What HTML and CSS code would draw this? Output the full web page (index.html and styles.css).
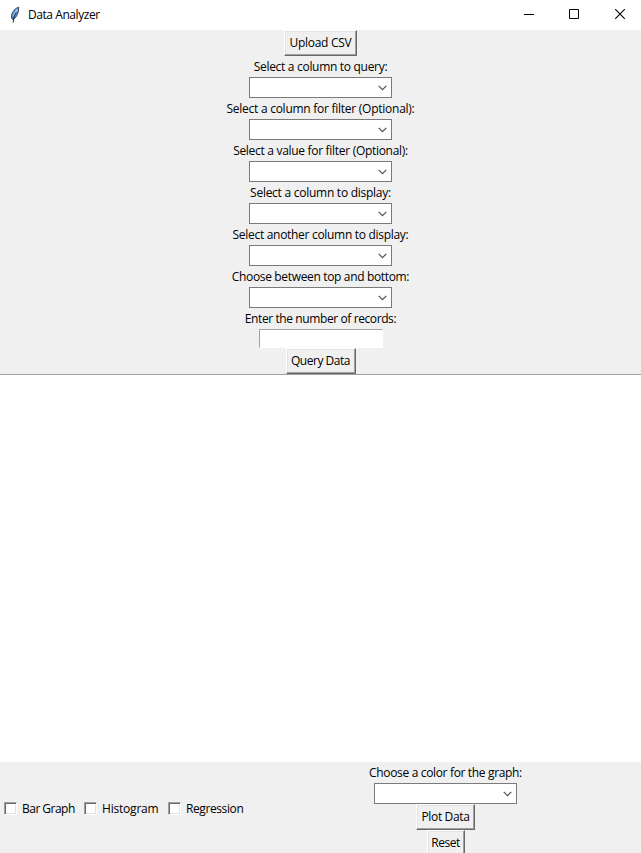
FILE: index.html
```html
<!DOCTYPE html>
<html lang="en">
<head>
<meta charset="utf-8">
<title>Data Analyzer</title>
<link rel="stylesheet" href="styles.css">
</head>
<body>
<svg class="defs" width="0" height="0" aria-hidden="true"><symbol id="chevron" viewBox="0 0 9 6"><path d="M.7 .8 4.5 4.6 8.3 .8" fill="none" stroke="#505050" stroke-width="1.2"/></symbol></svg>
<div class="window">
  <header class="titlebar">
    <svg class="feather" width="12" height="18" viewBox="0 0 12 18"><path d="M9.7 1.2C6.4 2 3.1 5.4 2.5 9.8L2.8 12.7 4.2 13.5C7.9 11.2 9.8 6.3 9.7 1.2Z" fill="#5b9bd8" stroke="#26364a" stroke-width=".9"/><path d="M8.3 3.5 4.6 9.8" stroke="#a5cdf5" stroke-width="1.5"/><path d="M7.4 6.2C5.5 8.8 4.5 11.8 4.2 16.5" fill="none" stroke="#111" stroke-width=".9"/></svg>
    <h1 class="title">Data Analyzer</h1>
    <div class="controls">
      <svg class="minimize" width="11" height="11" viewBox="0 0 11 11"><path d="M0 5.5h10" stroke="#000"/></svg>
      <svg class="maximize" width="11" height="11" viewBox="0 0 11 11"><path d="M.5 .5h9v9h-9z" fill="none" stroke="#000"/></svg>
      <svg width="11" height="11" viewBox="0 0 11 11"><path d="M.2 .2l9.6 9.6M9.8 .2l-9.6 9.6" stroke="#000" stroke-width="1.1"/></svg>
    </div>
  </header>
  <main class="query">
    <button class="btn upload">Upload CSV</button>
    <div class="label t-query">Select a column to query:</div>
    <div class="combo"><svg><use href="#chevron"/></svg></div>
    <div class="label t-filter">Select a column for filter (Optional):</div>
    <div class="combo"><svg><use href="#chevron"/></svg></div>
    <div class="label t-value">Select a value for filter (Optional):</div>
    <div class="combo"><svg><use href="#chevron"/></svg></div>
    <div class="label t-display">Select a column to display:</div>
    <div class="combo"><svg><use href="#chevron"/></svg></div>
    <div class="label t-another">Select another column to display:</div>
    <div class="combo"><svg><use href="#chevron"/></svg></div>
    <div class="label t-choose">Choose between top and bottom:</div>
    <div class="combo"><svg><use href="#chevron"/></svg></div>
    <div class="label t-enter">Enter the number of records:</div>
    <div class="entry"></div>
    <button class="btn run">Query Data</button>
  </main>
  <section class="output"></section>
  <footer class="plot">
    <div class="checks">
      <div class="check bar"><i class="box"></i><span>Bar Graph</span></div>
      <div class="check hist"><i class="box"></i><span>Histogram</span></div>
      <div class="check reg"><i class="box"></i><span>Regression</span></div>
    </div>
    <div class="actions">
      <div class="label t-color">Choose a color for the graph:</div>
      <div class="combo"><svg><use href="#chevron"/></svg></div>
      <button class="btn draw">Plot Data</button>
      <button class="btn reset">Reset</button>
    </div>
  </footer>
</div>
</body>
</html>
```
FILE: styles.css
```css
* { box-sizing: border-box; }
body { margin: 0; overflow: hidden; font: 12px "Open Sans", "Noto Sans", sans-serif; letter-spacing: -0.3px; color: #000; }
.defs { display: block; }
.window { width: 641px; height: 853px; display: flex; flex-direction: column; background: #f0f0f0; overflow: hidden; }
.titlebar { height: 30px; flex: none; display: flex; align-items: center; background: #fff; padding: 0 15px 1px 9px; }
.feather { margin-right: 7px; }
.title { margin: 0; padding-top: 1px; font-size: 12px; font-weight: 400; line-height: 20px; letter-spacing: -0.43px; }
.controls { margin-left: auto; display: flex; }
.minimize { margin-right: 34px; }
.maximize { margin-right: 35px; }
.query { height: 344px; flex: none; display: flex; flex-direction: column; align-items: center; }
.label { height: 21px; flex: none; line-height: 21px; white-space: nowrap; }
.t-filter, .t-display { letter-spacing: -0.26px; }
.t-choose, .t-color { letter-spacing: -0.34px; }
.t-enter { letter-spacing: -0.4px; }
.combo { width: 143px; height: 21px; flex: none; background: #fff; border: 1px solid #7a7a7a; display: flex; justify-content: flex-end; align-items: center; padding-right: 4px; }
.combo svg { width: 9px; height: 6px; }
.entry { width: 124px; height: 19px; flex: none; background: #fff; border: 1px solid; border-color: #a0a0a0 #fff #fff #a0a0a0; }
.btn { height: 26px; flex: none; padding: 0; font: inherit; letter-spacing: inherit; line-height: 20px; color: #000; white-space: nowrap; background: #f0f0f0; border: 1px solid; border-color: #fff #696969 #696969 #fff; border-radius: 0; box-shadow: inset -1px -1px #a0a0a0, inset 1px 1px #e3e3e3; }
.upload { width: 73px; }
.run { width: 70px; letter-spacing: -0.48px; }
.draw { width: 59px; letter-spacing: -0.35px; }
.reset { width: 38px; letter-spacing: -0.5px; }
.output { height: 388px; flex: none; background: #fff; border-top: 1px solid #a0a0a0; }
.plot { height: 91px; flex: none; display: flex; }
.checks { width: 250px; flex: none; display: flex; align-items: center; padding: 2px 0 0 4px; }
.check { display: flex; align-items: center; line-height: 20px; white-space: nowrap; }
.bar { width: 80px; letter-spacing: -0.52px; }
.hist { width: 84px; letter-spacing: -0.2px; }
.reg { letter-spacing: -0.4px; }
.box { width: 13px; height: 13px; margin-right: 5px; background: #fff; border: 1px solid; border-color: #a0a0a0 #fff #fff #a0a0a0; box-shadow: inset 1px 1px #696969, inset -1px -1px #e3e3e3; }
.actions { flex: 1; display: flex; flex-direction: column; align-items: center; }
```
